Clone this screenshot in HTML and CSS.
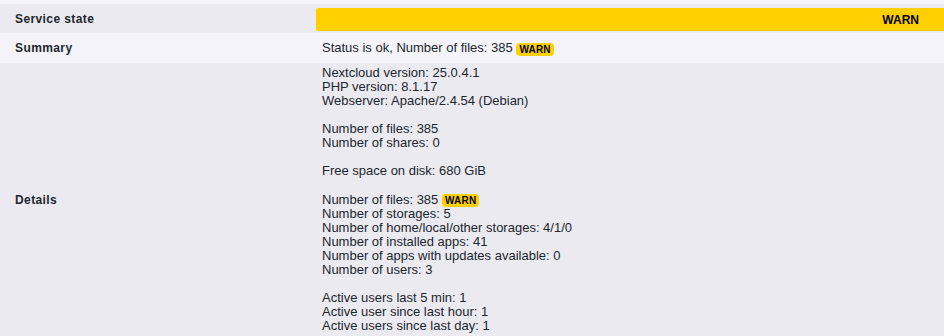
FILE: index.html
```html
<!DOCTYPE html>
<html>
<head>
<meta charset="utf-8">
<link rel="stylesheet" href="styles.css">
</head>
<body>
<div class="table">
  <div class="row row-dark row-state">
    <div class="label">Service state</div>
    <div class="value"><div class="state-cell">WARN</div></div>
  </div>
  <div class="row row-light row-summary">
    <div class="label">Summary</div>
    <div class="value text">Status is ok, Number of files: 385 <span class="badge">WARN</span></div>
  </div>
  <div class="row row-dark row-details">
    <div class="label">Details</div>
    <div class="value text details">
      <div class="line">Nextcloud version: 25.0.4.1</div>
      <div class="line">PHP version: 8.1.17</div>
      <div class="line">Webserver: Apache/2.4.54 (Debian)</div>
      <div class="line blank"></div>
      <div class="line">Number of files: 385</div>
      <div class="line">Number of shares: 0</div>
      <div class="line blank"></div>
      <div class="line">Free space on disk: 680 GiB</div>
      <div class="line blank"></div>
      <div class="line line-badge">Number of files: 385 <span class="badge">WARN</span></div>
      <div class="line">Number of storages: 5</div>
      <div class="line">Number of home/local/other storages: 4/1/0</div>
      <div class="line">Number of installed apps: 41</div>
      <div class="line">Number of apps with updates available: 0</div>
      <div class="line">Number of users: 3</div>
      <div class="line blank"></div>
      <div class="line">Active users last 5 min: 1</div>
      <div class="line">Active user since last hour: 1</div>
      <div class="line">Active users since last day: 1</div>
    </div>
  </div>
</div>
</body>
</html>
```

FILE: styles.css
```css
html, body {
  margin: 0;
  padding: 0;
}
body {
  background: #f4f4fa;
  font-family: "Liberation Sans", Arial, sans-serif;
  color: #1e262e;
  width: 944px;
  height: 336px;
  overflow: hidden;
}
.table {
  padding-top: 4px;
}
.row {
  display: grid;
  grid-template-columns: 316px 1fr;
  align-items: center;
}
.row-dark {
  background: #eaeaf0;
}
.row-light {
  background: #f4f4fa;
}
.label {
  padding-left: 15px;
  font-weight: bold;
  font-size: 12px;
  letter-spacing: 0.4px;
  color: #1e262e;
}
.row-state {
  height: 29px;
}
.row-state .value {
  align-self: start;
  padding-top: 4px;
}
.state-cell {
  background: #ffd000;
  height: 23px;
  border-radius: 2px 0 0 2px;
  display: flex;
  align-items: center;
  justify-content: flex-end;
  padding-right: 25px;
  font-weight: bold;
  font-size: 12px;
  color: #000;
}
.text {
  font-size: 13px;
  padding-left: 6px;
  color: #1e262e;
}
.row-summary {
  height: 30px;
}
.row-details {
  padding: 3px 0 3px;
}
.details .line {
  height: 14px;
  line-height: 14px;
  white-space: nowrap;
}
.details .line-badge {
  height: 15px;
  line-height: 15px;
}
.badge {
  display: inline-block;
  background: #ffd000;
  color: #000;
  font-weight: bold;
  font-size: 10px;
  letter-spacing: 0.2px;
  line-height: 13px;
  height: 13px;
  padding: 0 3px;
  border-radius: 4px;
  vertical-align: middle;
}
```
